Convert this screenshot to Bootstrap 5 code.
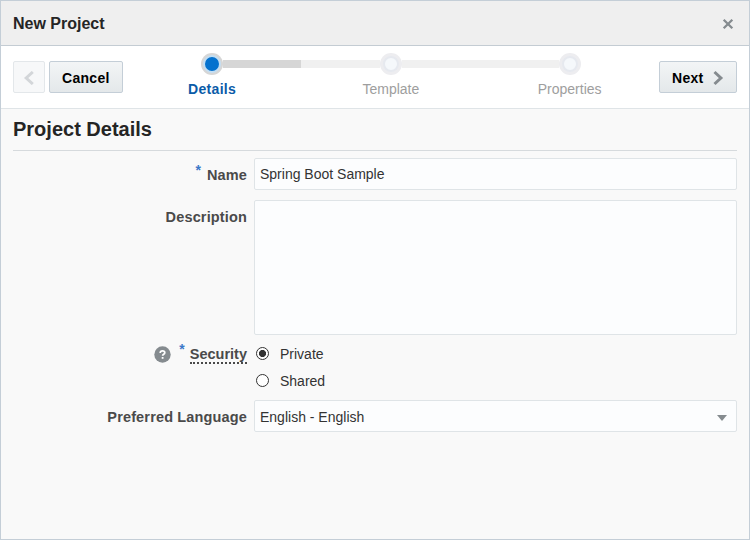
<!DOCTYPE html>
<html lang="en">
<head>
<meta charset="utf-8">
<meta name="viewport" content="width=device-width, initial-scale=1">
<title>New Project</title>
<link href="https://cdn.jsdelivr.net/npm/bootstrap@5.3.0/dist/css/bootstrap.min.css" rel="stylesheet">
<style>
body{font-family:"Liberation Sans",Arial,sans-serif;font-size:14px;line-height:20px;color:#333}
.wizard{height:540px;border:1px solid #c4ced7;background:#f9f9f9}
.wizard-head{height:45px;background:#efefef;border-bottom:1px solid #c4ccd3;padding:0 13px 0 12px}
.wizard-head h1{font-size:16px;color:#252525;padding-top:2px}
.wizard-head .btn{padding:2px 0 0}
.wizard-bar{height:63px;background:#fff;border-bottom:1px solid #dfe4e7;padding:0 12px}
.tool-btn{height:32px;border:1px solid #c4ced7;border-radius:2px;padding:2px 12px 0;font-size:14px;line-height:20px;font-weight:700;letter-spacing:.3px;color:#000;background:linear-gradient(#f3f5f6,#e4e8ea)}
.tool-btn.prev{width:32px;padding:2px 0 0;background:#f7f8f9;border-color:#e3e7ea;opacity:1}
.tool-btn.next{width:78px}
.step{flex:1 1 0;color:#9e9e9e}
.rail{height:22px;margin-top:7px}
.seg{height:8px;background:#f0f0f0}
.seg.done{background:#d6d6d6}
.seg.none{background:none}
.dot{width:22px;height:22px;padding:3px;border-radius:50%;background:#ededf0}
.dot::after{content:"";display:block;width:16px;height:16px;border:2px solid #e6e9ef;border-radius:50%;background:#f5f8fb}
.dot.on{background:#d6d6d6}
.dot.on::after{width:18px;height:18px;margin:-1px;border:2px solid #c3def3;background:#0572ce}
.step.current{color:#0b5ba8;font-weight:700;letter-spacing:.3px}
.step-name{margin-top:4px}
.wizard-body{padding:0 12px}
.wizard-body h2{height:42px;font-size:20px;line-height:40px;color:#252525;border-bottom:1px solid #d6dadd}
.fields{padding-top:7px}
.field-grid{grid-template-columns:234px 1fr;column-gap:7px}
.field-grid.desc{padding-top:10px}
.field-label{font-size:14.5px;font-weight:700;letter-spacing:.15px;color:#4a4a4a;padding-top:7px}
.star{color:#3b78c8;font-size:14px;line-height:11px;margin-right:6px;letter-spacing:0}
.star.sec{margin-left:8px;margin-right:5px;line-height:10px}
.field-grid .form-control,.field-grid .form-select{font-family:inherit;font-size:14px;line-height:20px;height:32px;padding:5px;border:1px solid #dfe4e7;border-radius:2px;background-color:#fcfdfe;color:#333}
.field-grid textarea.form-control{height:135px;resize:none}
.field-grid .form-select{padding-top:6px;padding-bottom:4px;background-image:url("data:image/svg+xml,%3Csvg xmlns='http://www.w3.org/2000/svg' viewBox='0 0 10 6'%3E%3Cpath fill='%23858b8f' d='M0 0h10L5 6z'/%3E%3C/svg%3E");background-size:10px 6px;background-position:right 9px top 14px}
.security{padding:5px 0 6px}
.security .field-label{padding-top:4px;letter-spacing:0}
.help{margin-top:2px}
.choice{height:27px}
.choice .form-check-input{width:13px;height:13px;margin:0 11px 0 2px;border:1px solid #333;background:#fff}
.choice .form-check-input:checked{background:radial-gradient(circle,#333 3.2px,#fff 3.9px)}
.dotted{border-bottom:2px dotted #4a4a4a;height:20px}
</style>
<script src="https://cdn.jsdelivr.net/npm/bootstrap@5.3.0/dist/js/bootstrap.bundle.min.js"></script>
</head>
<body>
<main class="wizard d-flex flex-column overflow-hidden">
  <header class="wizard-head d-flex align-items-center justify-content-between">
    <h1 class="fw-bold mb-0">New Project</h1>
    <button type="button" class="btn border-0 d-flex" aria-label="Close">
      <svg width="16" height="12" viewBox="0 0 16 12"><path d="M3.7 1.7l8.6 8.6M12.3 1.7l-8.6 8.6" stroke="#858b8f" stroke-width="2.3"/></svg>
    </button>
  </header>
  <nav class="wizard-bar d-flex align-items-start" aria-label="Steps">
    <div class="d-flex gap-1 align-self-center">
      <button type="button" class="btn tool-btn prev d-flex align-items-center justify-content-center" disabled aria-label="Previous">
        <svg width="12" height="14" viewBox="0 0 12 14"><path d="M9.8 1L3.2 7l6.6 6" fill="none" stroke="#d3d6d9" stroke-width="3"/></svg>
      </button>
      <button type="button" class="btn tool-btn">Cancel</button>
    </div>
    <div class="d-flex flex-grow-1 text-center">
      <div class="step current">
        <div class="rail d-flex align-items-center"><span class="seg none flex-fill"></span><span class="dot on"></span><span class="seg done flex-fill"></span></div>
        <div class="step-name">Details</div>
      </div>
      <div class="step">
        <div class="rail d-flex align-items-center"><span class="seg flex-fill"></span><span class="dot"></span><span class="seg flex-fill"></span></div>
        <div class="step-name">Template</div>
      </div>
      <div class="step">
        <div class="rail d-flex align-items-center"><span class="seg flex-fill"></span><span class="dot"></span><span class="seg none flex-fill"></span></div>
        <div class="step-name">Properties</div>
      </div>
    </div>
    <button type="button" class="btn tool-btn next d-flex align-items-center align-self-center">Next
      <svg class="ms-2 flex-shrink-0" width="13" height="16" viewBox="0 0 13 16"><path d="M2.5 2L8.9 8l-6.4 6" fill="none" stroke="#858b8f" stroke-width="3"/></svg>
    </button>
  </nav>
  <section class="wizard-body">
    <h2 class="fw-bold mb-0">Project Details</h2>
    <form class="fields">
      <div class="field-grid d-grid">
        <label for="name" class="field-label d-flex justify-content-end align-items-start"><span class="star">*</span>Name</label>
        <input id="name" class="form-control" value="Spring Boot Sample">
      </div>
      <div class="field-grid desc d-grid">
        <label for="desc" class="field-label text-end">Description</label>
        <textarea id="desc" class="form-control"></textarea>
      </div>
      <div class="field-grid security d-grid">
        <div class="field-label d-flex justify-content-end align-items-start">
          <svg class="help" width="17" height="17" viewBox="0 0 17 17"><circle cx="8.5" cy="8.5" r="8.2" fill="#858b8f"/><path d="M6.2 6.9C6.2 5.5 7.1 4.8 8.5 4.8s2.3.8 2.3 1.9c0 1.5-2.2 1.5-2.2 3.1" fill="none" stroke="#fff" stroke-width="1.7"/><path d="M7.7 11h1.8v1.8H7.7z" fill="#fff"/></svg>
          <span class="star sec">*</span><span class="dotted">Security</span>
        </div>
        <div>
          <label class="choice d-flex align-items-center"><input class="form-check-input" type="radio" name="security" checked>Private</label>
          <label class="choice d-flex align-items-center"><input class="form-check-input" type="radio" name="security">Shared</label>
        </div>
      </div>
      <div class="field-grid d-grid">
        <label for="lang" class="field-label text-end">Preferred Language</label>
        <select id="lang" class="form-select"><option>English - English</option></select>
      </div>
    </form>
  </section>
</main>
</body>
</html>
